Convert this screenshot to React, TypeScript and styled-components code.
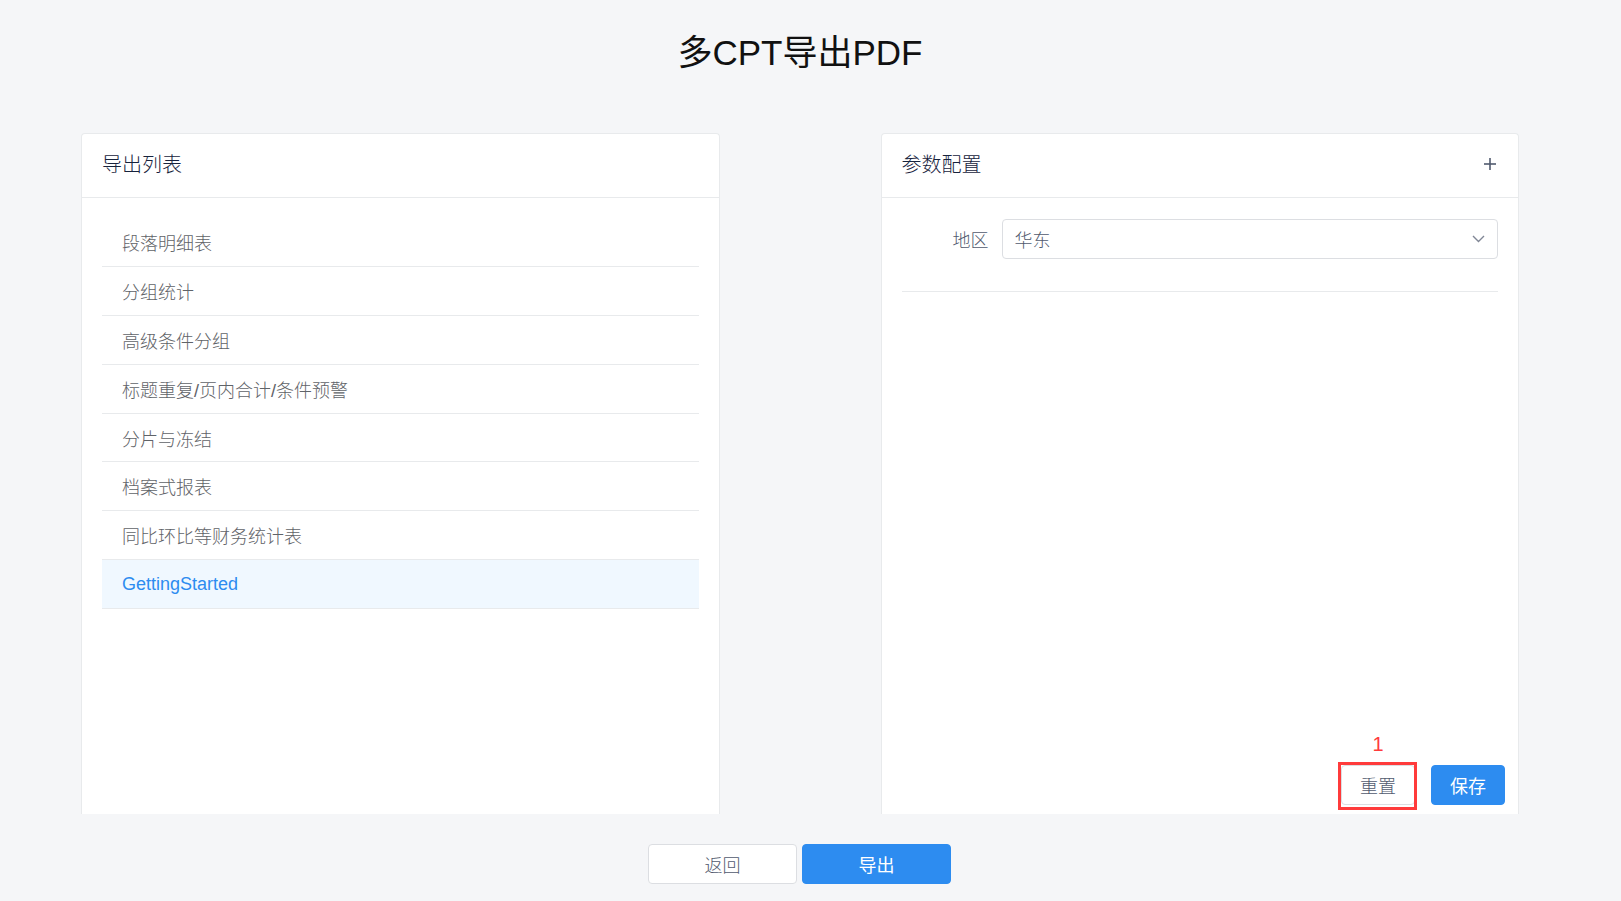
import React from 'react';
import styled, { createGlobalStyle } from 'styled-components';

const GlobalStyle = createGlobalStyle`
  html, body {
    margin: 0;
    padding: 0;
    background: #f5f6f8;
    font-family: "Liberation Sans", "Noto Sans CJK SC", sans-serif;
  }
`;

const Page = styled.div`
  width: 1438px;
  margin-left: 81px;
`;

const Title = styled.h1`
  margin: 0;
  height: 108px;
  line-height: 106px;
  text-align: center;
  font-size: 35px;
  font-weight: 400;
  color: #111;
`;

const Main = styled.div`
  display: flex;
  gap: 161px;
  margin-top: 25px;
`;

const Card = styled.section`
  width: 639px;
  height: 681px;
  box-sizing: border-box;
  background: #fff;
  border: 1px solid #e8eaec;
  border-bottom: none;
  border-radius: 4px 4px 0 0;
  display: flex;
  flex-direction: column;
`;

const CardHeader = styled.div`
  height: 64px;
  flex-shrink: 0;
  box-sizing: border-box;
  padding: 0 20px 4px;
  border-bottom: 1px solid #e8eaec;
  display: flex;
  align-items: center;
  justify-content: space-between;
  font-size: 20px;
  font-weight: 300;
  color: #17233d;
`;

const IconButton = styled.span`
  display: flex;
  align-items: center;
  justify-content: center;
  width: 20px;
  height: 20px;
  margin-right: -2px;
  color: #515a6e;
`;

const List = styled.ul`
  list-style: none;
  margin: 0;
  padding: 20px 20px 0;
`;

const Row = styled.li<{ $active?: boolean }>`
  height: 47.9px;
  box-sizing: content-box;
  border-bottom: 1px solid #e8eaec;
  padding-left: 20px;
  display: flex;
  align-items: center;
  font-size: 18px;
  font-weight: 300;
  color: ${(p) => (p.$active ? '#2d8cf0' : '#5f6368')};
  background: ${(p) => (p.$active ? '#f0f8ff' : 'transparent')};
`;

const Body = styled.div`
  flex: 1;
  display: flex;
  flex-direction: column;
  padding: 21px 20px 0;
`;

const FormItem = styled.div`
  display: flex;
  align-items: center;
`;

const Label = styled.label`
  width: 100px;
  box-sizing: border-box;
  padding-right: 13px;
  text-align: right;
  font-size: 18px;
  font-weight: 300;
  color: #515a6e;
`;

const Select = styled.div`
  flex: 1;
  height: 40px;
  box-sizing: border-box;
  border: 1px solid #dcdee2;
  border-radius: 4px;
  padding: 0 12px;
  display: flex;
  align-items: center;
  justify-content: space-between;
  font-size: 18px;
  font-weight: 300;
  color: #515a6e;
`;

const Divider = styled.div`
  margin-top: 32px;
  border-top: 1px solid #e8eaec;
`;

const Actions = styled.div`
  margin-top: auto;
  display: flex;
  justify-content: flex-end;
  gap: 16px;
  padding: 0 0 9px;
  margin-right: -7px;
`;

const Button = styled.button<{ $primary?: boolean; $w?: number }>`
  width: ${(p) => p.$w ?? 74}px;
  height: 40px;
  box-sizing: border-box;
  border-radius: 4px;
  border: 1px solid ${(p) => (p.$primary ? '#2d8cf0' : '#dcdee2')};
  background: ${(p) => (p.$primary ? '#2d8cf0' : '#fff')};
  color: ${(p) => (p.$primary ? '#fff' : '#515a6e')};
  font-family: inherit;
  font-size: 18px;
  font-weight: ${(p) => (p.$primary ? 400 : 300)};
  padding: 0;
  cursor: pointer;
`;

const Marked = styled.div`
  position: relative;
  margin-bottom: -1px;
`;

const MarkBox = styled.span`
  position: absolute;
  left: -3px;
  top: -3px;
  right: -2px;
  bottom: -4px;
  border: 3px solid #ff3b3b;
  pointer-events: none;
`;

const MarkNum = styled.span`
  position: absolute;
  left: 0;
  right: 0;
  top: -32px;
  text-align: center;
  font-family: "Liberation Sans", sans-serif;
  font-size: 20px;
  color: #ff3b3b;
`;

const Footer = styled.div`
  display: flex;
  justify-content: center;
  gap: 5px;
  margin-top: 30px;
  margin-left: -1px;
`;

const items = [
  '段落明细表',
  '分组统计',
  '高级条件分组',
  '标题重复/页内合计/条件预警',
  '分片与冻结',
  '档案式报表',
  '同比环比等财务统计表',
  'GettingStarted',
];

export default function App() {
  return (
    <>
      <GlobalStyle />
      <Page>
        <Title>多CPT导出PDF</Title>
        <Main>
          <Card>
            <CardHeader>导出列表</CardHeader>
            <List>
              {items.map((t, i) => (
                <Row key={t} $active={i === items.length - 1}>
                  {t}
                </Row>
              ))}
            </List>
          </Card>
          <Card>
            <CardHeader>
              参数配置
              <IconButton>
                <svg width="14" height="14" viewBox="0 0 14 14" fill="none" stroke="currentColor" strokeWidth="1.6">
                  <line x1="7" y1="1" x2="7" y2="13" />
                  <line x1="1" y1="7" x2="13" y2="7" />
                </svg>
              </IconButton>
            </CardHeader>
            <Body>
              <FormItem>
                <Label>地区</Label>
                <Select>
                  <span>华东</span>
                  <svg width="13" height="8" viewBox="0 0 13 8" fill="none" stroke="#808695" strokeWidth="1.4">
                    <polyline points="1,1 6.5,6.5 12,1" />
                  </svg>
                </Select>
              </FormItem>
              <Divider />
              <Actions>
                <Marked>
                  <MarkNum>1</MarkNum>
                  <Button>重置</Button>
                  <MarkBox />
                </Marked>
                <Button $primary>保存</Button>
              </Actions>
            </Body>
          </Card>
        </Main>
        <Footer>
          <Button $w={149}>返回</Button>
          <Button $w={149} $primary>导出</Button>
        </Footer>
      </Page>
    </>
  );
}
